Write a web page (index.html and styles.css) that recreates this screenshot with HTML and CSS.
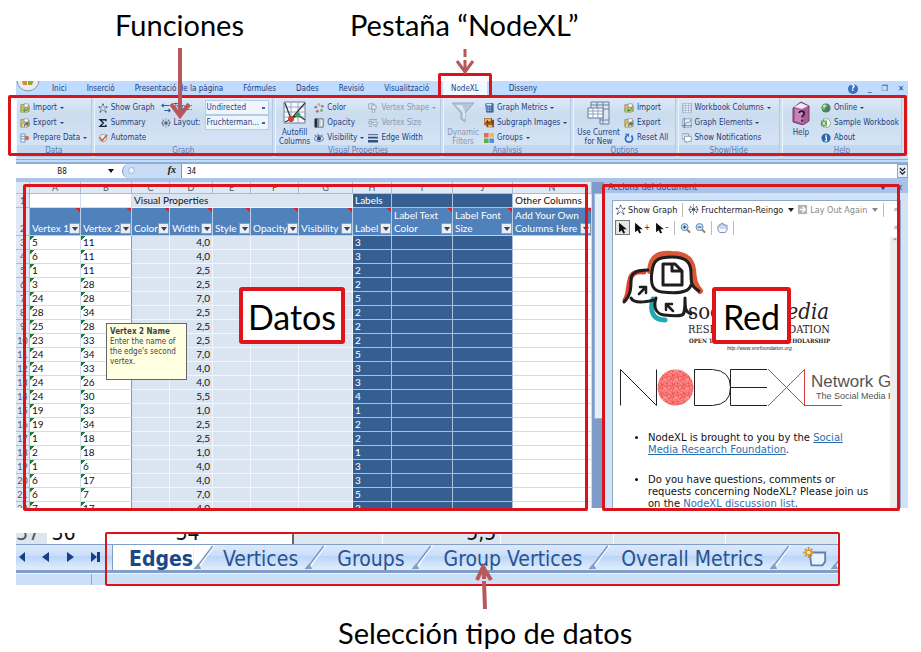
FILE: index.html
```html
<!DOCTYPE html>
<html lang="es">
<head>
<meta charset="utf-8">
<title>NodeXL</title>
<link rel="stylesheet" href="styles.css">
</head>
<body>
<svg class="defs" aria-hidden="true">
  <symbol id="i-import" viewBox="0 0 12 12"><path d="M1 2h4l1 1h5v7H1z" fill="#e6c25a" stroke="#8a7a3c" stroke-width=".8"/><path d="M5 1h5v4H5z" fill="#fff" stroke="#678" stroke-width=".7"/><path d="M1 11l2-5h8l-2 5z" fill="#f5dc85" stroke="#8a7a3c" stroke-width=".7"/><path d="M9 4c0 3-1 4-3 4V6L3 9l3 2.500V10c3 0 4-2 3-6z" fill="#4f9b45"/></symbol>
  <symbol id="i-export" viewBox="0 0 12 12"><path d="M1 2h4l1 1h5v7H1z" fill="#e6c25a" stroke="#8a7a3c" stroke-width=".8"/><path d="M5 1h5v4H5z" fill="#fff" stroke="#678" stroke-width=".7"/><path d="M1 11l2-5h8l-2 5z" fill="#f5dc85" stroke="#8a7a3c" stroke-width=".7"/><path d="M5 11c-1-3 1-5 3-5V4l3 3-3 3V8C6 8 6 9 5 11z" fill="#4276c4"/></symbol>
  <symbol id="i-prepare" viewBox="0 0 12 12"><path d="M1 1h5v10H1zM1 4h5M1 7h5" fill="#eef4fc" stroke="#5c7fae" stroke-width=".9"/><path d="M6 4h3M6 8h3" stroke="#678" stroke-width=".8"/><circle cx="8.500" cy="6" r="2.500" fill="#df6242"/></symbol>
  <symbol id="i-graph" viewBox="0 0 12 12"><path d="M6 1l1.500 4H11L8 7l1.500 4L6 8.500 2.500 11 4 7 1 5h3.500z" fill="none" stroke="#66708c" stroke-width=".8"/><path d="M5.300 1h1.500v1.500H5.300zM1 4h1.500v1.500H1zM9.700 4h1.500v1.500H9.700zM2 10h1.500v1.500H2zM8.700 10h1.500v1.500H8.700z" fill="#45506c"/></symbol>
  <symbol id="i-sum" viewBox="0 0 12 12"><path d="M9.500 4V2H2.500l4 4-4 4h7V8" fill="none" stroke="#15213c" stroke-width="1.700"/></symbol>
  <symbol id="i-auto" viewBox="0 0 12 12"><circle cx="6" cy="6" r="4.500" fill="#eef1f8" stroke="#8996b0"/><path d="M2 5l3 4 6-7" fill="none" stroke="#d8602d" stroke-width="1.800"/></symbol>
  <symbol id="i-type" viewBox="0 0 12 12"><path d="M1 3h9M4 9h7M3 1L1 3l2 2M9 7l2 2-2 2" fill="none" stroke="#315b9a" stroke-width="1.300"/></symbol>
  <symbol id="i-layout" viewBox="0 0 12 12"><path d="M6 0v12M0 6h12M2 2l8 8M10 2l-8 8" stroke="#7a879b" stroke-width=".8"/><path d="M3 2L1.500 6 3 10M9 2l1.500 4L9 10" fill="none" stroke="#4f5c74"/><circle cx="6" cy="6" r="1.800" fill="#526078"/></symbol>
  <symbol id="i-fill" viewBox="0 0 24 24"><path d="M1 1h21v21H1z" fill="#f7fafe" stroke="#6d7f96"/><path d="M1 6h21M1 11h21M1 16h21M8 1v21M15 1v21" stroke="#96a9c2"/><path d="M2 2l6 16 7-4 7 5M8 18l14-16M2 21l6-3" fill="none" stroke="#33363a" stroke-width="1.300"/><circle cx="8" cy="18" r="3" fill="#cf3e31"/><circle cx="15" cy="14" r="2.500" fill="#45a149"/></symbol>
  <symbol id="i-color" viewBox="0 0 12 12"><circle cx="6" cy="2" r="1.700" fill="#e7a440"/><circle cx="10" cy="4" r="1.700" fill="#c75fc5"/><circle cx="9" cy="9" r="1.700" fill="#6cb857"/><circle cx="4" cy="10" r="1.700" fill="#da5c4c"/><circle cx="2" cy="5" r="1.700" fill="#5c92d7"/></symbol>
  <symbol id="i-opacity" viewBox="0 0 12 12"><path d="M1 1h10v10H1z" fill="#eef2f7" stroke="#42536e"/><path d="M1 1h3v10H1z" fill="#222b3a"/><path d="M4 1h2v10H4z" fill="#75849a"/><path d="M6 1h2v10H6z" fill="#b7c3d2"/></symbol>
  <symbol id="i-eye" viewBox="0 0 12 12"><path d="M0 7c3-5 9-5 12 0-3 4-9 4-12 0z" fill="#dfe9fa" stroke="#3f5488"/><circle cx="6" cy="6.500" r="2.500" fill="#37498c"/><path d="M2 4L1 2M5 3V1M9 4l1-2" stroke="#3f5488"/></symbol>
  <symbol id="i-shape" viewBox="0 0 12 12"><path d="M1 1h6v6H1z" fill="#e3ebf5" stroke="#8b98aa"/><circle cx="7" cy="5" r="3" fill="#d9e4f1" stroke="#8b98aa"/><path d="M5 11V8h3v3z" fill="#fff" stroke="#8b98aa"/></symbol>
  <symbol id="i-size" viewBox="0 0 12 12"><path d="M1 2h10M1 10h4M8 10h3" stroke="#8b98aa"/><path d="M1 4h3v3H1zM6 5h5v3H6z" fill="#eef3f9" stroke="#8b98aa"/></symbol>
  <symbol id="i-width" viewBox="0 0 12 12"><path d="M0 2h12" stroke="#354f7b"/><path d="M0 5.500h12" stroke="#354f7b" stroke-width="2"/><path d="M0 10h12" stroke="#354f7b" stroke-width="3"/></symbol>
  <symbol id="i-filter" viewBox="0 0 24 24"><path d="M1 2h22l-9 10v9l-4-3v-6z" fill="#b8c5d8" stroke="#99a9bf"/><path d="M5 4h6l3 7v7l-2-1v-6z" fill="#e1e8f1"/></symbol>
  <symbol id="i-metrics" viewBox="0 0 12 12"><path d="M2 1l7-1 2 1v10H3z" fill="#4770ad" stroke="#304d7d" stroke-width=".7"/><path d="M3 1h6v2H3z" fill="#d8efff"/><path d="M3 5h6M3 7h6M3 9h6" stroke="#dce9fa" stroke-dasharray="1 1"/></symbol>
  <symbol id="i-subgraph" viewBox="0 0 12 12"><path d="M3 2h9v9H3z" fill="#774c22"/><path d="M0 0h9v8H0z" fill="#efb54c" stroke="#793e1b"/><path d="M1 7l3-5 2 3 2-2v4z" fill="#703824"/><path d="M5 8h5v3H5z" fill="#e7b164"/></symbol>
  <symbol id="i-groups" viewBox="0 0 12 12"><path d="M0 0h5.500v5.500H0z" fill="#e66b53"/><path d="M6.500 0H12v5.500H6.500z" fill="#efbb4f"/><path d="M0 6.500h5.500V12H0z" fill="#65a94e"/><path d="M6.500 6.500H12V12H6.500z" fill="#548cdc"/></symbol>
  <symbol id="i-current" viewBox="0 0 24 24"><path d="M4 1h18v22h-9V14H4z" fill="#dce6f3" stroke="#6c7f9d"/><path d="M4 4h18M13 8h9M13 19h9M10 1v7M16 1v22" stroke="#6c7f9d"/><path d="M1 7h15v10H1z" fill="#fff" stroke="#617695"/><path d="M1 10h15M1 13h15M6 7v10M11 7v10" stroke="#8da0bb"/></symbol>
  <symbol id="i-reset" viewBox="0 0 12 12"><path d="M3 3c-3 5 0 8 3 8s6-3 3-8" fill="none" stroke="#3168c4" stroke-width="2"/><path d="M1 1h5v4z" fill="#3168c4"/></symbol>
  <symbol id="i-columns" viewBox="0 0 12 12"><path d="M1 0h10v12H1z" fill="#f5f8fd" stroke="#7e91b1"/><path d="M4.300 0v12M7.700 0v12M1 3h10M1 6h10M1 9h10" stroke="#8fa2c0" stroke-width=".8"/></symbol>
  <symbol id="i-elements" viewBox="0 0 12 12"><path d="M1 1h10v10H1z" fill="#e9f0fa" stroke="#7e91b1"/><path d="M3 0v12M0 9h12M3 9l3-4 2 1 3-4" fill="none" stroke="#5a739b" stroke-width=".9"/></symbol>
  <symbol id="i-notes" viewBox="0 0 12 12"><path d="M0 1h8v6H0z" fill="#e3e9f2" stroke="#8090a8"/><path d="M3 4h8v6H7l-2 2v-2H3z" fill="#fff" stroke="#8090a8"/></symbol>
  <symbol id="i-book" viewBox="0 0 18 24"><path d="M1 7l8-6 8 4v15l-6 4-10-3z" fill="#a75b9a" stroke="#734067"/><path d="M2 6l7-4 7 3-6 3z" fill="#f5e7f1"/><path d="M3 8l8 1v13l-8-2z" fill="#c883bb"/><path d="M7 12c1-3 6-2 5 1-.5 1.500-2 1.500-2 3.500m0 2v2" fill="none" stroke="#35152f" stroke-width="1.800"/></symbol>
  <symbol id="i-globe" viewBox="0 0 12 12"><circle cx="6" cy="6" r="5.500" fill="#497f70"/><path d="M2 3l4-2 2 3-3 2-1 3-3-2z" fill="#7cba63"/><circle cx="4" cy="3.500" r="1.500" fill="#d7edcd"/></symbol>
  <symbol id="i-excel" viewBox="0 0 12 12"><path d="M3 1h6l3 5-3 5H3z" fill="#f8fff6" stroke="#819e85"/><path d="M0 3h7v7H0z" fill="#4a9d42"/><path d="M1.500 4l4 5M5.500 4l-4 5" stroke="#fff" stroke-width="1.200"/></symbol>
  <symbol id="i-info" viewBox="0 0 12 12"><circle cx="6" cy="6" r="5.500" fill="#2669ad"/><path d="M6 2v2M5 5h1.500v4M4.500 9.500h3" fill="none" stroke="#fff" stroke-width="1.400"/></symbol>
  <symbol id="i-cursor" viewBox="0 0 12 14"><path d="M2 1v11l3-2.500 2 4 2-1-2-4h4z" fill="#0b0b0b"/></symbol>
  <symbol id="i-lens" viewBox="0 0 12 12"><path d="M7.500 7.500L11 11" stroke="#9c7653" stroke-width="2"/><circle cx="5" cy="5" r="3.800" fill="#d2e7fa" stroke="#587eaf"/><path d="M3 5h4" stroke="#284f93" stroke-width="1.200"/></symbol>
  <symbol id="i-hand" viewBox="0 0 12 12"><path d="M3 11L1 8V4h1.500V2.500h2V1h2v1h2v1H11v5l-2 3z" fill="#f5f8ff" stroke="#6b85b6"/><path d="M3.500 4v3M5.500 2v5M7.500 2v5M9.500 3v4" stroke="#8ca0c4" stroke-width=".8"/></symbol>
  <symbol id="slant" viewBox="0 0 24 26"><path d="M0 0h21L3 26H0z" fill="currentColor"/><path d="M4 25L22 0" stroke="#fff" stroke-width="1.500"/><path d="M2 25L20 1" stroke="#7c96bf" stroke-width="1.500"/><path d="M0 25l5-6 3 6z" fill="#849dc3"/></symbol>
</svg>
<main class="figure">
  <header class="captions"><span>Funciones</span><span>Pestaña “NodeXL”</span></header>

  <section class="window">
    <nav class="tabs">
      <svg class="office" viewBox="0 0 24 12"><circle cx="12" cy="-1" r="11" fill="#e8edf2" stroke="#8593a8"/><path d="M5-4h6v8H7z" fill="#dc8a32"/><path d="M12-4h7l-3 8h-4z" fill="#93a637"/></svg>
      <a href="#">Inici</a><a href="#">Inserció</a><a href="#">Presentació de la pàgina</a><a href="#">Fórmules</a><a href="#">Dades</a><a href="#">Revisió</a><a href="#">Visualització</a><a href="#" class="active">NodeXL</a><a href="#">Disseny</a>
      <div class="winbtns"><button class="q">?</button><button>_</button><button>❐</button><button>✕</button></div>
    </nav>

    <div class="ribbon">
      <section class="group g-data"><div class="cmds"><div class="stack">
        <button><svg><use href="#i-import"/></svg>Import<i></i></button><button><svg><use href="#i-export"/></svg>Export<i></i></button><button><svg><use href="#i-prepare"/></svg>Prepare Data<i></i></button></div></div><h2>Data</h2></section>
      <section class="group g-graph"><div class="cmds"><div class="stack">
        <button><svg><use href="#i-graph"/></svg>Show Graph</button><button><svg><use href="#i-sum"/></svg>Summary</button><button><svg><use href="#i-auto"/></svg>Automate</button></div>
        <div class="fields"><label for="type"><svg><use href="#i-type"/></svg>Type:</label><select id="type"><option>Undirected</option></select>
        <label for="layout"><svg><use href="#i-layout"/></svg>Layout:</label><select id="layout"><option>Fruchterman...</option></select></div></div><h2>Graph</h2></section>
      <section class="group g-visual"><div class="cmds"><button class="big"><svg><use href="#i-fill"/></svg>Autofill<br>Columns</button><div class="stack">
        <button><svg><use href="#i-color"/></svg>Color</button><button><svg><use href="#i-opacity"/></svg>Opacity</button><button><svg><use href="#i-eye"/></svg>Visibility<i></i></button></div><div class="stack">
        <button disabled><svg><use href="#i-shape"/></svg>Vertex Shape<i></i></button><button disabled><svg><use href="#i-size"/></svg>Vertex Size</button><button><svg><use href="#i-width"/></svg>Edge Width</button></div></div><h2>Visual Properties</h2></section>
      <section class="group g-analysis"><div class="cmds"><button class="big" disabled><svg><use href="#i-filter"/></svg>Dynamic<br>Filters</button><div class="stack">
        <button><svg><use href="#i-metrics"/></svg>Graph Metrics<i></i></button><button><svg><use href="#i-subgraph"/></svg>Subgraph Images<i></i></button><button><svg><use href="#i-groups"/></svg>Groups<i></i></button></div></div><h2>Analysis</h2></section>
      <section class="group g-options"><div class="cmds"><button class="big"><svg><use href="#i-current"/></svg>Use Current<br>for New</button><div class="stack">
        <button><svg><use href="#i-import"/></svg>Import</button><button><svg><use href="#i-export"/></svg>Export</button><button><svg><use href="#i-reset"/></svg>Reset All</button></div></div><h2>Options</h2></section>
      <section class="group g-show"><div class="cmds"><div class="stack">
        <button><svg><use href="#i-columns"/></svg>Workbook Columns<i></i></button><button><svg><use href="#i-elements"/></svg>Graph Elements<i></i></button><button><svg><use href="#i-notes"/></svg>Show Notifications</button></div></div><h2>Show/Hide</h2></section>
      <section class="group g-help"><div class="cmds"><button class="big"><svg><use href="#i-book"/></svg>Help</button><div class="stack">
        <button><svg><use href="#i-globe"/></svg>Online<i></i></button><button><svg><use href="#i-excel"/></svg>Sample Workbook</button><button><svg><use href="#i-info"/></svg>About</button></div></div><h2>Help</h2></section>
      <div class="mark mark-ribbon"></div>
    </div>

    <div class="formula">
      <input class="cellref" aria-label="Cell" value="B8"><i></i><span class="fx"><span class="knob"></span><em>fx</em></span><input class="value" aria-label="Formula" value="34"><button aria-label="Expand"><svg viewBox="0 0 8 10"><path d="M1 1l3 3 3-3M1 5l3 3 3-3" fill="none" stroke="#222" stroke-width="1.500"/></svg></button>
    </div>

    <div class="work">
      <div class="sheet">
        <table>
          <colgroup><col class="c0"><col class="cA"><col class="cA"><col class="cC"><col class="cD"><col class="cC"><col class="cF"><col class="cG"><col class="cH"><col class="cI"><col class="cJ"><col class="cN"></colgroup>
          <thead>
            <tr class="letters"><th></th><th>A</th><th>B</th><th>C</th><th>D</th><th>E</th><th>F</th><th>G</th><th>H</th><th>I</th><th>J</th><th>N</th></tr>
            <tr class="bands"><th>1</th><td></td><td></td><td colspan="5" class="lt">Visual Properties</td><td class="dk">Labels</td><td class="dk"></td><td class="dk"></td><td>Other Columns</td></tr>
            <tr class="names"><th>2</th><td><div>Vertex 1<button></button></div></td><td><div>Vertex 2<button></button></div></td><td><div>Color<button></button></div></td><td><div>Width<button></button></div></td><td><div>Style<button></button></div></td><td><div>Opacity<button></button></div></td><td><div>Visibility<button></button></div></td><td><div>Label<button></button></div></td><td><div>Label Text<br>Color<button></button></div></td><td><div>Label Font<br>Size<button></button></div></td><td><div>Add Your Own<br>Columns Here<button></button></div></td></tr>
          </thead>
          <tbody>
            <tr><th>3</th><td>5</td><td>11</td><td></td><td>4,0</td><td></td><td></td><td></td><td>3</td><td></td><td></td><td></td></tr>
            <tr><th>4</th><td>6</td><td>11</td><td></td><td>4,0</td><td></td><td></td><td></td><td>3</td><td></td><td></td><td></td></tr>
            <tr><th>5</th><td>1</td><td>11</td><td></td><td>2,5</td><td></td><td></td><td></td><td>2</td><td></td><td></td><td></td></tr>
            <tr><th>6</th><td>3</td><td>28</td><td></td><td>2,5</td><td></td><td></td><td></td><td>2</td><td></td><td></td><td></td></tr>
            <tr><th>7</th><td>24</td><td>28</td><td></td><td>7,0</td><td></td><td></td><td></td><td>5</td><td></td><td></td><td></td></tr>
            <tr><th>8</th><td>28</td><td>34</td><td></td><td>2,5</td><td></td><td></td><td></td><td>2</td><td></td><td></td><td></td></tr>
            <tr><th>9</th><td>25</td><td>28</td><td></td><td>2,5</td><td></td><td></td><td></td><td>2</td><td></td><td></td><td></td></tr>
            <tr><th>10</th><td>23</td><td>33</td><td></td><td>2,5</td><td></td><td></td><td></td><td>2</td><td></td><td></td><td></td></tr>
            <tr><th>11</th><td>24</td><td>34</td><td></td><td>7,0</td><td></td><td></td><td></td><td>5</td><td></td><td></td><td></td></tr>
            <tr><th>12</th><td>24</td><td>33</td><td></td><td>4,0</td><td></td><td></td><td></td><td>3</td><td></td><td></td><td></td></tr>
            <tr><th>13</th><td>24</td><td>26</td><td></td><td>4,0</td><td></td><td></td><td></td><td>3</td><td></td><td></td><td></td></tr>
            <tr><th>14</th><td>24</td><td>30</td><td></td><td>5,5</td><td></td><td></td><td></td><td>4</td><td></td><td></td><td></td></tr>
            <tr><th>15</th><td>19</td><td>33</td><td></td><td>1,0</td><td></td><td></td><td></td><td>1</td><td></td><td></td><td></td></tr>
            <tr><th>16</th><td>19</td><td>34</td><td></td><td>2,5</td><td></td><td></td><td></td><td>2</td><td></td><td></td><td></td></tr>
            <tr><th>17</th><td>1</td><td>18</td><td></td><td>2,5</td><td></td><td></td><td></td><td>2</td><td></td><td></td><td></td></tr>
            <tr><th>18</th><td>2</td><td>18</td><td></td><td>1,0</td><td></td><td></td><td></td><td>1</td><td></td><td></td><td></td></tr>
            <tr><th>19</th><td>1</td><td>6</td><td></td><td>4,0</td><td></td><td></td><td></td><td>3</td><td></td><td></td><td></td></tr>
            <tr><th>20</th><td>6</td><td>17</td><td></td><td>4,0</td><td></td><td></td><td></td><td>3</td><td></td><td></td><td></td></tr>
            <tr><th>21</th><td>6</td><td>7</td><td></td><td>7,0</td><td></td><td></td><td></td><td>5</td><td></td><td></td><td></td></tr>
            <tr><th>22</th><td>7</td><td>17</td><td></td><td>4,0</td><td></td><td></td><td></td><td>3</td><td></td><td></td><td></td></tr>
          </tbody>
        </table>
        <div class="tip"><b>Vertex 2 Name</b><br>Enter the name of the edge's second vertex.</div>
      </div>
      <div class="vscroll"><span></span></div>
      <aside class="pane">
        <div class="pane-title">Accions del document<span><i></i>✕</span></div>
        <div class="doc">
          <div class="bar"><button><svg><use href="#i-graph"/></svg>Show Graph</button><hr><button><svg><use href="#i-layout"/></svg>Fruchterman-Reingo<i></i></button><button disabled><svg viewBox="0 0 12 12"><path d="M1 1h10v10H1z" fill="#b3b3b3"/><path d="M3 6h5M6 3l3 3-3 3" fill="none" stroke="#fff" stroke-width="1.500"/></svg>Lay Out Again<i></i></button><hr><span class="more">»</span></div>
          <div class="bar tools"><button class="on" aria-label="Select"><svg><use href="#i-cursor"/></svg></button><button aria-label="Add to selection"><svg><use href="#i-cursor"/></svg>+</button><button aria-label="Remove from selection"><svg><use href="#i-cursor"/></svg>–</button><hr><button aria-label="Zoom in"><svg viewBox="0 0 12 12"><use href="#i-lens"/><path d="M5 3v4" stroke="#284f93"/></svg></button><button aria-label="Zoom out"><svg><use href="#i-lens"/></svg></button><hr><button aria-label="Pan"><svg><use href="#i-hand"/></svg></button><hr><span class="more">»</span></div>
          <div class="page">
            <div class="content">
              <svg class="logos" viewBox="0 0 277 183" width="277" height="183">
                <defs><pattern id="mesh" width="11" height="9" patternUnits="userSpaceOnUse"><rect width="11" height="9" fill="#f98f8f"/><path d="M0 0l11 7M1 9L8 0M0 5l11-3M4 0l2 9M0 9l11-5M9 0l2 9M0 2l5 7" stroke="#f34141" stroke-width=".6"/></pattern></defs>
                <g fill="none" stroke-linejoin="round" stroke-linecap="round">
                  <path d="M12 63c4-5 3-14 5-20 1-7 7-9 14-8" stroke="#d9452b" stroke-width="5"/>
                  <path d="M40 62c-4 14 1 21 12 21" stroke="#22aab3" stroke-width="5"/>
                  <path d="M37 34c1-15 9-18 22-17 15 0 20 6 21 16 1 9 1 14 7 21" stroke="#dc5638" stroke-width="6"/>
                  <path d="M35 33c-14 0-17 4-17 11 0 9-1 15-7 21M18 61c3 6 15 4 23 2" stroke="#201d1e" stroke-width="3"/>
                  <path d="M43 61c-3 9 0 16 8 17 8 1 15 1 18 0s3-6 3-17c0 12 1 14 6 16" fill="#fff" stroke="#201d1e" stroke-width="3"/>
                  <path d="M39 35c1-12 6-15 20-15s19 5 19 16c0 10 0 13 8 18M39 34c-2 14 1 20 10 21 8 1 18 1 23-1 4-1 5-3 6-6" fill="#fff" stroke="#201d1e" stroke-width="3"/>
                  <path d="M50 27h12l7 7v14H50zM59 27v7h9" stroke="#201d1e" stroke-width="3"/>
                  <path d="M26 57l7-7m-6 0h6v6M60 74l-7-7m0 6v-6h6" stroke="#201d1e" stroke-width="2.500"/>
                </g>
                <g class="smrf" fill="#242122"><text x="75" y="82" class="soc">social</text><text x="216" y="82" text-anchor="end" class="med">media</text><text x="75" y="96" class="res">RESEARCH</text><text x="217" y="96" text-anchor="end" class="res">FOUNDATION</text><text x="76" y="106" class="open">OPEN TOOLS</text><text x="217" y="106" text-anchor="end" class="open">OPEN SCHOLARSHIP</text><text x="114" y="113" class="url">http://www.smrfoundation.org</text></g>
                <g fill="none" stroke="#222"><path d="M7.500 168.500v-36l36 36v-36M81.500 132.500h18q18 1 18 18t-18 18h-18zM154 132.500h-36.500v36H154M117.500 150.500H154"/><path d="M155 132l37 37M155 169l36.500-36.500v36H229" stroke="#dd3a3d"/></g>
                <circle cx="62.500" cy="150.500" r="18" fill="url(#mesh)"/>
                <text x="198" y="150" class="net">Network Graph</text><text x="203" y="162" class="by">The Social Media Research</text>
              </svg>
              <ul><li>NodeXL is brought to you by the <a href="#">Social Media Research Foundation</a>.</li><li>Do you have questions, comments or requests concerning NodeXL? Please join us on the <a href="#" class="plain">NodeXL discussion list</a>.</li></ul>
            </div>
            <div class="docscroll">⌃</div>
          </div>
        </div>
      </aside>
      <div class="mark mark-data"></div><div class="mark mark-net"></div>
      <strong class="tag tag-data">Datos</strong><strong class="tag tag-net">Red</strong>
    </div>
  </section>

  <section class="strip">
    <div class="cut"><span class="n0">37</span><span class="n1">36</span><span class="n2">34</span><span class="n3"></span><span class="n4">5,5</span><span></span><span></span><span></span></div>
    <nav class="sheets">
      <div class="nav"><svg viewBox="0 0 90 20"><path d="M9 5v10L3 10zM33 5v10l-7-5zM51 5v10l7-5zM75 5v10l6-5zM81 5h3v10h-3z" fill="#173f86"/></svg></div>
      <a href="#" class="cur">Edges</a><svg class="cutout first"><use href="#slant"/></svg><a href="#">Vertices</a><svg class="cutout"><use href="#slant"/></svg><a href="#">Groups</a><svg class="cutout"><use href="#slant"/></svg><a href="#">Group Vertices</a><svg class="cutout"><use href="#slant"/></svg><a href="#">Overall Metrics</a><svg class="cutout"><use href="#slant"/></svg>
      <button class="newsheet" aria-label="New sheet"><svg viewBox="0 0 30 24"><path d="M8 6h17v10l-3 4H10z" fill="#e7f2ff" stroke="#5f7fac" stroke-width="2"/><path d="M7 0v12M1 6h12M3 2l8 8M11 2l-8 8" stroke="#dc941f" stroke-width="2"/><circle cx="7" cy="6" r="2" fill="#fff3bd"/></svg></button><svg class="cutout"><use href="#slant"/></svg>
    </nav>
    <div class="status"><span></span></div>
    <div class="mark mark-sheets"></div>
  </section>
  <footer>Selección tipo de datos</footer>

  <div class="mark mark-tab"></div>
  <svg class="arrows" viewBox="0 0 921 652" width="921" height="652" fill="none" stroke="#b7585b"><path d="M180 48v67M171 104l9 12 9-12" stroke-width="4"/><path d="M465 49v8M465 60v11M457 61l8 11 8-11" stroke-width="3"/><path d="M485 609l-1-28M484 579v-12M477 580l6-13 8 13" stroke-width="4"/></svg>
</main>
</body>
</html>
```
FILE: styles.css
```css
* { box-sizing: border-box; }
body { margin: 0; background: #fff; color: #000; font-family: Lato, "Open Sans", sans-serif; }
button, input, select { font: inherit; color: inherit; border: 0; background: none; padding: 0; margin: 0; border-radius: 0; }
a { color: inherit; text-decoration: none; }
i { display: inline-block; border: 2px solid transparent; border-top: 3px solid currentColor; border-bottom: 0; flex: none; }
.defs { position: absolute; width: 0; height: 0; }
.figure { position: relative; overflow: hidden; }
.captions { display: flex; gap: 106px; height: 81px; padding: 8px 0 0 115px; font-size: 29px; line-height: 34px; }
.window { margin: 0 13px 0 16px; font-family: "DejaVu Sans Condensed", "DejaVu Sans", sans-serif; font-size: 8px; background: #bfdbff; color: #1e3f7c; }

.tabs { display: flex; align-items: center; gap: 20px; height: 15px; padding-right: 4px; overflow: hidden; white-space: nowrap; }
.office { width: 24px; height: 12px; align-self: flex-start; margin-right: -8px; flex: none; }
.tabs .active { background: #f4f9ff; margin: 0 -6px; padding: 0 8px; line-height: 15px; }
.tabs .active + a { margin-left: 8px; }
.winbtns { margin-left: auto; display: flex; gap: 10px; align-items: center; }
.winbtns .q { width: 10px; height: 10px; border-radius: 50%; background: #3b6fbe; color: #fff; font-weight: bold; line-height: 10px; }

.ribbon { position: relative; display: flex; gap: 2px; height: 64px; padding: 1px 6px 2px 0; background: #cfdff2; border-bottom: 1px solid #8eaed6; }
.group { display: flex; flex-direction: column; min-width: 0; border: 1px solid #b4cae6; border-left-color: #edf5ff; border-radius: 2px; background: linear-gradient(#dce8f6, #cbdcef 30%, #d9e7f7); overflow: hidden; white-space: nowrap; }
.g-data { flex: 75 1 0; } .g-graph { flex: 180 1 0; } .g-visual { flex: 167 1 0; } .g-analysis { flex: 128 1 0; } .g-options { flex: 102 1 0; } .g-show { flex: 102 1 0; } .g-help { flex: 120 1 0; }
.group h2 { margin: 0; height: 11px; flex: none; background: #c1d8f1; color: #5a7cb0; font-size: 8px; line-height: 11px; font-weight: normal; text-align: center; }
.cmds { display: flex; flex: 1; min-height: 0; gap: 4px; padding: 2px 3px 0; }
.stack { display: flex; flex-direction: column; }
.stack button, .fields label { display: flex; align-items: center; gap: 3px; height: 15px; }
.group svg { width: 10px; height: 10px; flex: none; }
.group .cmds i { border-width: 2px 2px 0; }
.bar i { margin-left: 3px; }
.group button:disabled { color: #8b98ac; }
.fields { display: grid; grid-template-columns: 44px 1fr; flex: 1; align-content: start; margin-left: 2px; }
.fields select { appearance: none; height: 15px; width: 100%; border: 1px solid #b5cbe6; background: linear-gradient(#47628f, #47628f) right 3px center / 3px 2px no-repeat #eef5fd; padding-left: 1px; }
.big { line-height: 9px; text-align: center; align-self: flex-start; }
.group .big svg { display: block; width: 24px; height: 24px; margin: 1px auto 3px; }
.g-analysis .cmds { gap: 5px; }
.g-help .cmds { padding-left: 6px; gap: 8px; }

.formula { display: flex; align-items: center; height: 20px; margin-top: 2px; border-top: 2px solid #8eaed6; border-bottom: 4px solid #a9c4e8; background: #fff; color: #111; }
.cellref { width: 92px; text-align: center; }
.formula .fx { display: flex; justify-content: space-between; width: 60px; height: 100%; margin-left: 8px; padding: 0 5px; background: #c9dcf5; border-left: 1px solid #7899c8; border-right: 1px solid #7899c8; border-radius: 8px 0 0 8px; }
.fx em { font: italic 10px "Liberation Serif", serif; font-weight: bold; }
.knob { width: 7px; height: 7px; margin-top: 3px; border-radius: 50%; background: #e8f1fc; border: 1px solid #9db5d5; }
.formula i { border-width: 4px 3px 0; }
.value { flex: 1; min-width: 0; padding-left: 5px; }
.formula button { display: grid; place-items: center; width: 11px; height: 14px; border: 1px solid #88a5ce; background: #e5effb; }
.formula svg { width: 7px; height: 9px; }

.work { position: relative; display: flex; height: 326px; background: #a7c1e5; }
.sheet { position: relative; flex: 576 1 0; min-width: 0; overflow: hidden; background: #fff; color: #111; font-family: Lato, sans-serif; font-size: 10px; }
table { width: 100%; table-layout: fixed; border-collapse: separate; border-spacing: 0; }
.c0 { width: 14px; } .cA { width: 51px; } .cC { width: 38px; } .cD { width: 43px; } .cF { width: 48px; } .cG { width: 54px; } .cH { width: 39px; } .cI { width: 61px; } .cJ { width: 60px; } .cN { width: 79px; }
th, td { height: 14px; padding: 0 2px; line-height: 13px; font-weight: normal; text-align: left; white-space: nowrap; border-right: 1px solid #d3dce8; border-bottom: 1px solid #d3dce8; }
th { padding: 0; background: #dfe8f3; color: #4a5870; text-align: center; font-size: 9px; border-color: #a9bcd5; }
.letters th { height: 12px; line-height: 11px; }
.bands .lt, tbody td:nth-child(n+4):nth-child(-n+8) { background: #dbe5f1; border-color: #f3f7fb; }
.bands .dk, tbody td:nth-child(n+9):nth-child(-n+11) { background: #365f91; color: #fff; border-color: #a9bfda; }
tbody td:nth-child(3) { border-right-color: #8f969f; }
tbody td:nth-child(5) { text-align: right; }
tbody td:nth-child(2), tbody td:nth-child(3), tbody td:nth-child(9) { background-image: linear-gradient(135deg, #16813a 3px, transparent 3px); }
.names td { height: 28px; padding: 0 0 0 2px; background: linear-gradient(225deg, #d9242a 3px, transparent 3px), #4f81bd; color: #fff; vertical-align: bottom; border-color: #bcd0e8; }
.names th { vertical-align: bottom; }
.names div { position: relative; line-height: 13px; }
.names button { position: absolute; right: 0; bottom: 1px; width: 11px; height: 11px; border: 1px solid #8d9bb0; background: #e9eef5; display: grid; place-items: center; }
.names button::after { content: ""; border: 3px solid transparent; border-top: 4px solid #30405d; border-bottom: 0; }
.tip { position: absolute; left: 90px; top: 141px; width: 81px; height: 57px; padding: 3px; border: 1px solid #666; background: #ffffe1; color: #444; font: 8px/10px "DejaVu Sans Condensed", "DejaVu Sans", sans-serif; }
.vscroll { width: 12px; padding: 11px 1px 0 2px; background: #7f9cc8; }
.vscroll span { display: block; height: 226px; background: #e5eefb; border: 1px solid #9db5d5; }
.pane { flex: 304 1 0; min-width: 0; display: flex; flex-direction: column; background: #d3e3f7; }
.pane-title { display: flex; justify-content: space-between; height: 11px; padding: 0 5px 0 4px; line-height: 10px; font-size: 9px; background: #a7c1e8; color: #234983; }
.pane-title span { display: flex; gap: 10px; align-items: center; }
.pane-title i { border-width: 4px 3px 0; }
.doc { flex: 1; min-height: 0; margin: 7px 7px 0 8px; border: 1px solid #91a7c6; border-bottom: 0; background: #fff; color: #222; display: flex; flex-direction: column; }
.bar { display: flex; align-items: center; gap: 3px; height: 17px; padding: 0 2px; font-size: 9px; white-space: nowrap; }
.bar button { display: flex; align-items: center; gap: 2px; }
.bar button:disabled { color: #888; }
.bar svg { width: 11px; height: 11px; flex: none; }
.bar hr { width: 1px; height: 14px; margin: 0 2px; border: 0; background: #bbb; }
.bar i { border-width: 4px 3px 0; }
.more { margin-left: auto; color: #888; font-size: 8px; }
.tools { height: 19px; gap: 2px; }
.tools button { height: 15px; padding: 0 1px; font-size: 8px; gap: 0; }
.tools svg { width: 11px; height: 12px; }
.tools .on { border: 1px solid #777; background: #e5e5e5; }
.page { flex: 1; min-height: 0; display: flex; overflow: hidden; }
.content { flex: 1; min-width: 0; overflow: hidden; }
.logos { display: block; overflow: hidden; }
.docscroll { width: 10px; background: #ececec; color: #777; text-align: center; font-size: 9px; }
.smrf { font-family: "DejaVu Serif Condensed", "DejaVu Serif", serif; }
.soc { font-size: 22px; } .med { font-size: 22px; font-style: italic; } .res { font-size: 11px; } .open { font-size: 6px; font-weight: bold; }
.url { font: italic 5px "Liberation Sans", sans-serif; }
.net { font: 17px "Liberation Sans", sans-serif; fill: #555; } .by { font: 9px "Liberation Sans", sans-serif; fill: #555; }
.content ul { margin: 0; padding: 12px 18px 0 35px; font: 10px/12px "DejaVu Sans", sans-serif; color: #111; }
.content li { margin-bottom: 18px; }
.content a { color: #2a6fb0; text-decoration: underline; }
.content .plain { text-decoration: none; }

.mark { position: absolute; border: 3px solid #d9151b; border-radius: 2px; pointer-events: none; }
.mark-ribbon { left: -8px; right: 1px; top: -1px; height: 61px; }
.mark-data { left: 7px; right: 320px; top: 2px; bottom: -3px; }
.mark-net { left: 586px; right: 8px; top: 2px; bottom: -3px; }
.mark-tab { left: 438px; top: 73px; width: 54px; height: 25px; }
.tag { position: absolute; top: 105px; height: 57px; border: 4px solid #e0151b; border-radius: 3px; background: #fff; color: #000; font: 34px/52px Lato, sans-serif; text-align: center; }
.tag-data { left: 223px; width: 106px; }
.tag-net { left: 696px; width: 79px; }

.strip { position: relative; margin: 25px 83px 0 16px; height: 52px; background: #d3e3f8; font: 21px "DejaVu Sans Condensed", "DejaVu Sans", sans-serif; color: #28538f; }
.cut { display: flex; height: 11px; overflow: hidden; background: #dce6f1; color: #111; line-height: 1px; }
.cut span { flex: 120 1 0; border-right: 1px solid #fff; }
.cut .n0 { flex: 33 1 0; color: #555; } .cut .n1 { flex: 126 1 0; background: #fff; padding-left: 4px; } .cut .n2 { flex: 126 1 0; background: #fff; padding-left: 6px; border-right: 2px solid #666; } .cut .n3 { flex: 95 1 0; } .cut .n4 { flex: 122 1 0; text-align: right; padding-right: 4px; }
.sheets { display: flex; align-items: stretch; height: 29px; border-top: 1px solid #809fc8; border-bottom: 3px solid #809fc8; background: linear-gradient(#dce9fb, #c9defa 45%, #b9d5f8 46%, #e3effd); white-space: nowrap; overflow: hidden; }
.sheets a { line-height: 28px; }
.sheets .cur { padding-left: 16px; background: #fff; font-weight: bold; color: #1b478b; }
.nav { width: 97px; flex: none; border-right: 1px solid #809fc8; }
.nav svg { width: 90px; height: 20px; margin-top: 2px; display: block; }
.cutout { width: 24px; height: 25px; flex: none; margin: 0 9px 0 6px; color: transparent; }
.cutout.first { color: #fff; margin: 0 6px 0 0; }
.newsheet { flex: none; }
.newsheet svg { display: block; width: 28px; height: 22px; }
.newsheet + .cutout { margin: 0; }
.status { height: 12px; border-top: 1px solid #eef5ff; background: #cddff7; }
.status span { display: block; width: 76px; height: 11px; border-right: 1px solid #8ca9d1; }
.mark-sheets { left: 89px; right: -2px; top: -1px; bottom: -1px; border-width: 2px; }
footer { padding: 31px 0 2px 338px; font-size: 29px; line-height: 34px; }
.arrows { position: absolute; left: 0; top: 0; pointer-events: none; }
```
